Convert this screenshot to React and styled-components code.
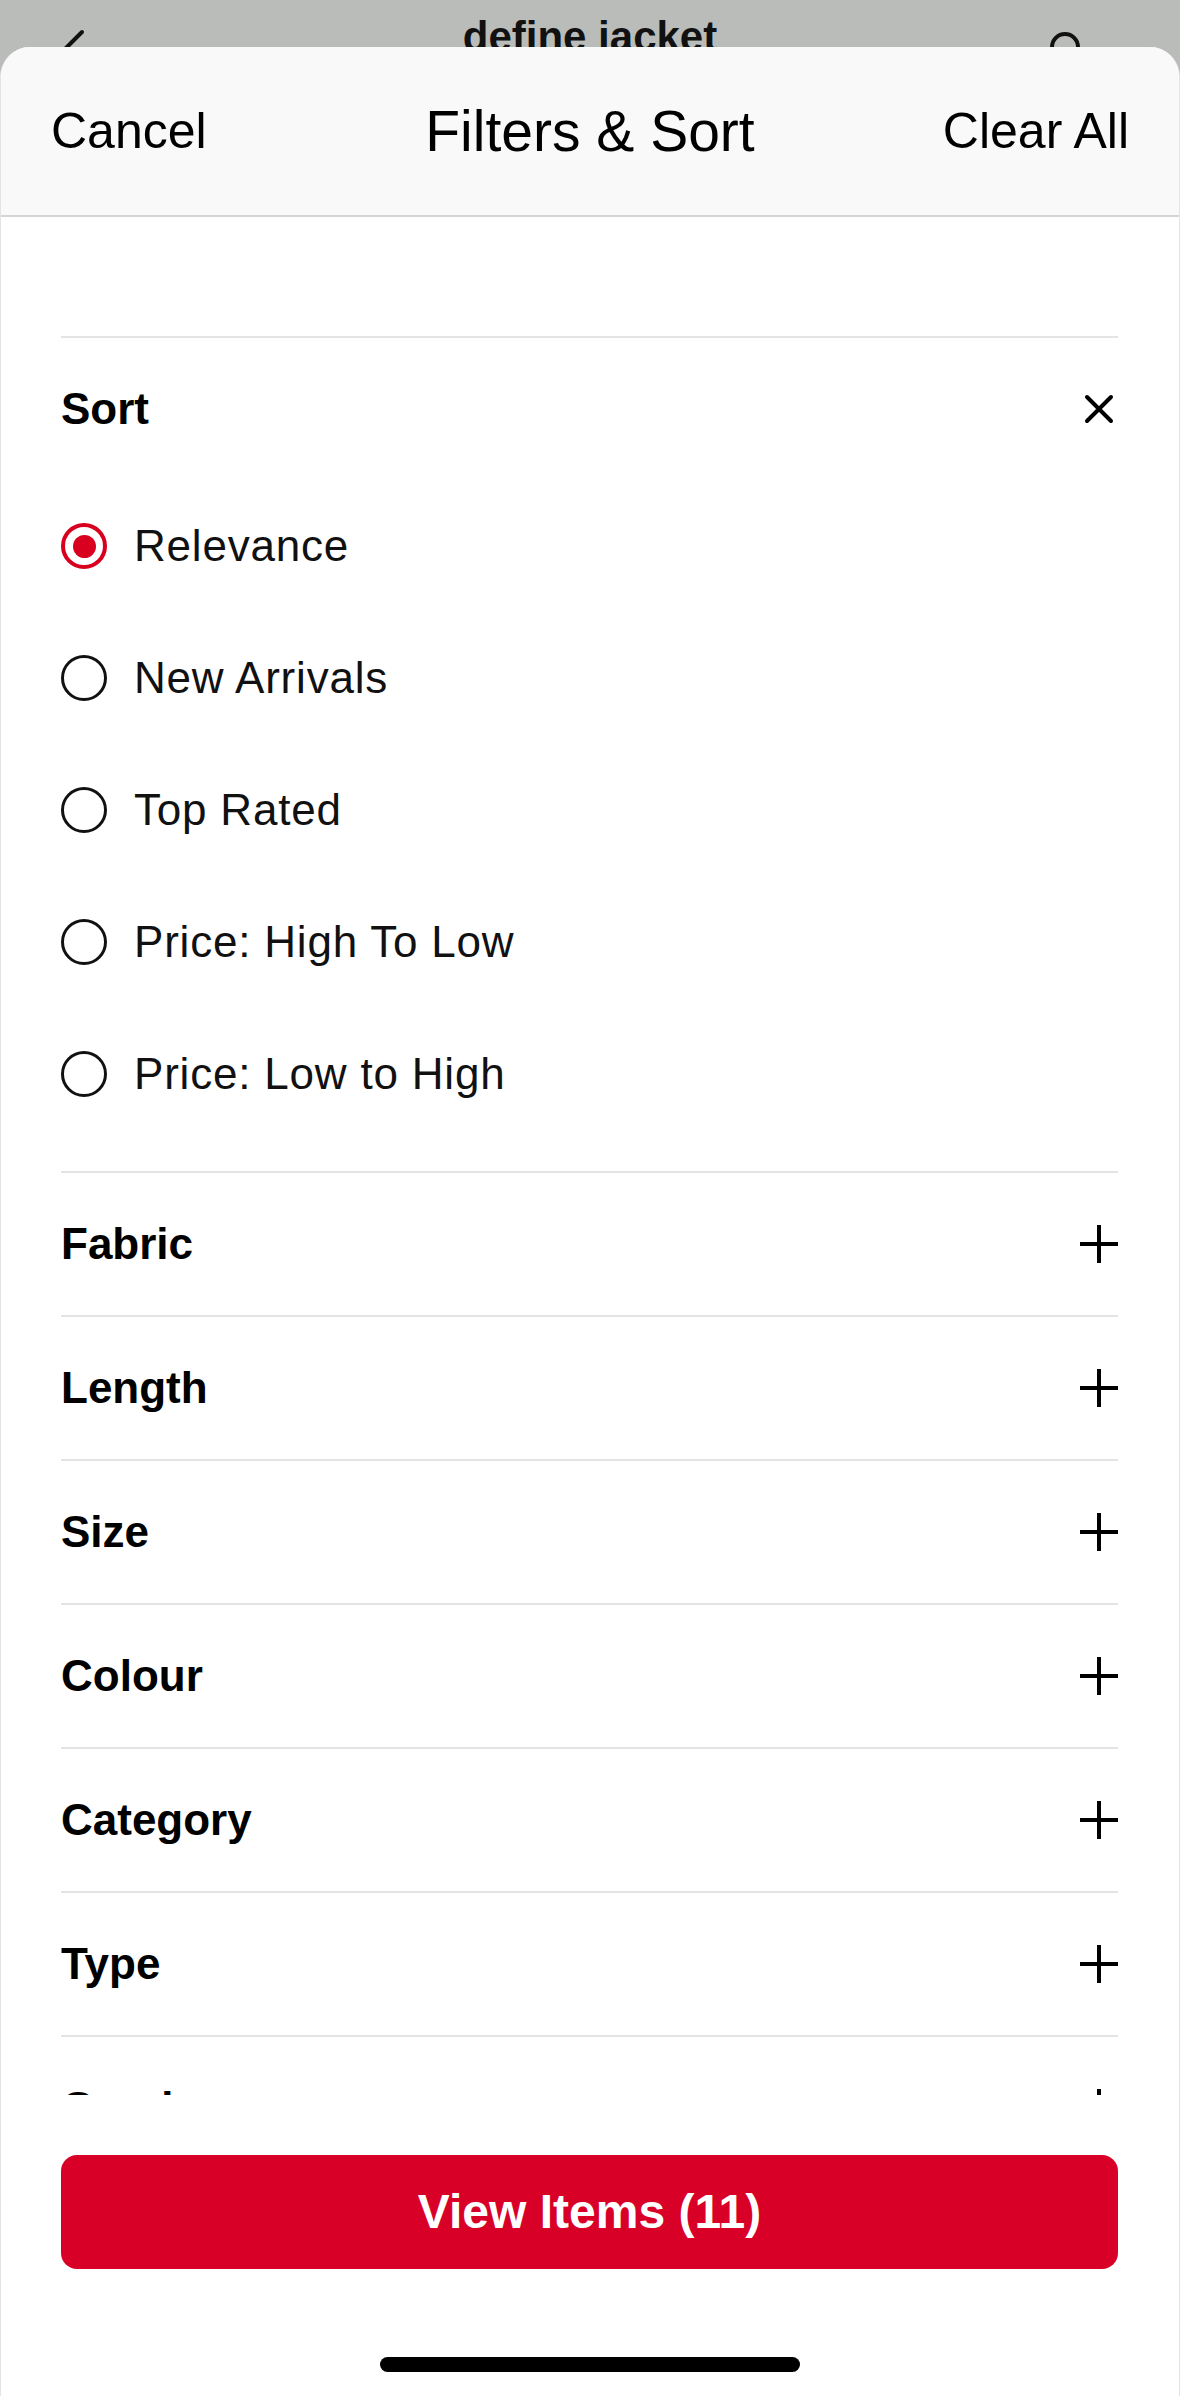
import React from "react";
import styled, { createGlobalStyle } from "styled-components";

const GlobalStyle = createGlobalStyle`
  html, body {
    margin: 0;
    padding: 0;
    background: #babcb9;
    font-family: "Liberation Sans", Arial, Helvetica, sans-serif;
    color: #000;
  }
  * { box-sizing: border-box; }
`;

const Page = styled.div`
  position: relative;
  width: 1180px;
  height: 2396px;
  overflow: hidden;
  background: #babcb9;
`;

const NavBar = styled.div`
  display: grid;
  grid-template-columns: 1fr auto 1fr;
  align-items: start;
  height: 110px;
  padding-top: 16px;
`;

const NavBack = styled.div`
  padding-left: 58px;
  margin-top: 12px;
  display: flex;
`;

const NavTitle = styled.div`
  font-size: 42px;
  font-weight: 700;
  line-height: 1;
  color: #111;
`;

const NavSearch = styled.div`
  justify-self: end;
  padding-right: 95px;
  margin-top: 11px;
  display: flex;
`;

const Sheet = styled.div`
  position: absolute;
  top: 47px;
  left: 0;
  right: 0;
  bottom: 0;
  display: flex;
  flex-direction: column;
  background: #fff;
  border-radius: 30px 30px 0 0;
  border-left: 1px solid #e4e4e4;
  border-right: 1px solid #e4e4e4;
  overflow: hidden;
`;

const Header = styled.header`
  flex: 0 0 auto;
  height: 170px;
  display: grid;
  grid-template-columns: 1fr auto 1fr;
  align-items: center;
  padding: 0 50px 0 50px;
  background: #f9f9f9;
  border-bottom: 2px solid #d5d5d5;
`;

const HeaderAction = styled.span`
  font-size: 50px;
  line-height: 1;
  justify-self: ${(p) => (p.$end ? "end" : "start")};
`;

const HeaderTitle = styled.h1`
  margin: 0;
  font-size: 57px;
  font-weight: 400;
  line-height: 1;
`;

const Scroll = styled.div`
  flex: 1 1 auto;
  overflow: hidden;
  padding: 119px 61px 0 60px;
`;

const Section = styled.section`
  border-top: 2px solid #e4e4e4;
  padding-bottom: ${(p) => p.$pad || 0}px;
`;

const SectionHead = styled.div`
  height: 142px;
  display: flex;
  align-items: center;
  justify-content: space-between;
`;

const SectionLabel = styled.span`
  font-size: 44px;
  font-weight: 700;
  line-height: 1;
`;

const IconBox = styled.span`
  width: 38px;
  height: 38px;
  display: flex;
  align-items: center;
  justify-content: center;
`;

const Option = styled.label`
  height: 132px;
  display: flex;
  align-items: center;
  gap: 27px;
`;

const Radio = styled.span`
  width: 46px;
  height: 46px;
  border-radius: 50%;
  border: ${(p) => (p.$on ? "4px solid #d9001f" : "3.5px solid #111")};
  display: flex;
  align-items: center;
  justify-content: center;
  &::after {
    content: "";
    display: ${(p) => (p.$on ? "block" : "none")};
    width: 23px;
    height: 23px;
    border-radius: 50%;
    background: #d9001f;
  }
`;

const OptionText = styled.span`
  font-size: 44px;
  line-height: 1;
  letter-spacing: 0.8px;
  color: #111;
`;

const Footer = styled.footer`
  flex: 0 0 auto;
  display: flex;
  flex-direction: column;
  align-items: center;
  padding: 60px 61px 24px 60px;
  background: #fff;
`;

const PrimaryButton = styled.button`
  width: 100%;
  height: 114px;
  border: none;
  border-radius: 16px;
  background: #d90027;
  color: #fff;
  font-family: inherit;
  font-size: 48px;
  font-weight: 700;
  line-height: 1;
  cursor: pointer;
`;

const HomeIndicator = styled.div`
  width: 420px;
  height: 15px;
  margin-top: 88px;
  border-radius: 8px;
  background: #000;
`;

const CloseIcon = () => (
  <svg width="32" height="32" viewBox="0 0 32 32">
    <path d="M4 4 L28 28 M28 4 L4 28" stroke="#000" strokeWidth="4" strokeLinecap="round" />
  </svg>
);

const PlusIcon = () => (
  <svg width="38" height="38" viewBox="0 0 38 38">
    <path d="M19 0 V38 M0 19 H38" stroke="#000" strokeWidth="4" />
  </svg>
);

const sortOptions = [
  "Relevance",
  "New Arrivals",
  "Top Rated",
  "Price: High To Low",
  "Price: Low to High",
];

const filters = ["Fabric", "Length", "Size", "Colour", "Category", "Type", "Gender"];

export default function App() {
  return (
    <>
      <GlobalStyle />
      <Page>
        <NavBar>
          <NavBack>
            <svg width="28" height="48" viewBox="0 0 28 48">
              <path d="M24 4 L4 24 L24 44" fill="none" stroke="#111" strokeWidth="4" strokeLinecap="round" strokeLinejoin="round" />
            </svg>
          </NavBack>
          <NavTitle>define jacket</NavTitle>
          <NavSearch>
            <svg width="40" height="40" viewBox="0 0 40 40">
              <circle cx="20" cy="20" r="13" fill="none" stroke="#111" strokeWidth="4" />
              <path d="M29 29 L37 37" stroke="#111" strokeWidth="4" strokeLinecap="round" />
            </svg>
          </NavSearch>
        </NavBar>

        <Sheet>
          <Header>
            <HeaderAction>Cancel</HeaderAction>
            <HeaderTitle>Filters &amp; Sort</HeaderTitle>
            <HeaderAction $end>Clear All</HeaderAction>
          </Header>

          <Scroll>
            <Section $pad={31}>
              <SectionHead>
                <SectionLabel>Sort</SectionLabel>
                <IconBox>
                  <CloseIcon />
                </IconBox>
              </SectionHead>
              {sortOptions.map((o, i) => (
                <Option key={o}>
                  <Radio $on={i === 0} />
                  <OptionText>{o}</OptionText>
                </Option>
              ))}
            </Section>
            {filters.map((f) => (
              <Section key={f}>
                <SectionHead>
                  <SectionLabel>{f}</SectionLabel>
                  <IconBox>
                    <PlusIcon />
                  </IconBox>
                </SectionHead>
              </Section>
            ))}
          </Scroll>

          <Footer>
            <PrimaryButton>View Items (11)</PrimaryButton>
            <HomeIndicator />
          </Footer>
        </Sheet>
      </Page>
    </>
  );
}
